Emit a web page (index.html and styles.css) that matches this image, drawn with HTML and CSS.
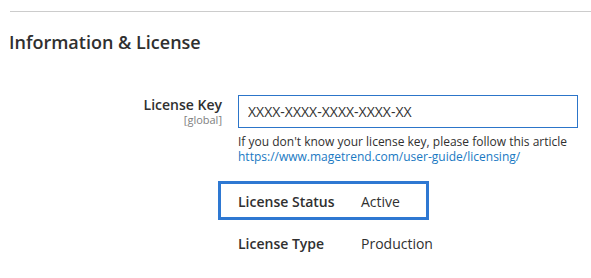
FILE: index.html
```html
<!DOCTYPE html>
<html lang="en">
<head>
<meta charset="utf-8">
<title>Information &amp; License</title>
<link rel="stylesheet" href="styles.css">
</head>
<body>
<div class="page">
  <div class="divider"></div>
  <h2 class="section-title">Information &amp; License</h2>
  <div class="field-row">
    <div class="field-label">
      <div class="label-text">License Key</div>
      <div class="scope">[global]</div>
    </div>
    <div class="field-value">
      <input class="text-input" type="text" value="XXXX-XXXX-XXXX-XXXX-XX">
      <p class="note">If you don't know your license key, please follow this article<br><a class="note-link" href="#">https://www.magetrend.com/user-guide/licensing/</a></p>
      <div class="info-row info-row--highlight">
        <span class="info-label">License Status</span>
        <span class="info-value">Active</span>
      </div>
      <div class="info-row">
        <span class="info-label">License Type</span>
        <span class="info-value">Production</span>
      </div>
    </div>
  </div>
</div>
</body>
</html>
```
FILE: styles.css
```css
* { box-sizing: border-box; }
html, body { margin: 0; padding: 0; background: #fff; }
body {
  font-family: "Open Sans", "Liberation Sans", sans-serif;
  color: #303030;
  width: 591px;
  height: 278px;
  overflow: hidden;
}
.page {
  padding-top: 11px;
}
.divider {
  margin-left: 10px;
  border-top: 1px solid #cccccc;
}
.section-title {
  margin: 18px 0 0 0;
  padding-left: 9px;
  font-size: 18px;
  line-height: 24px;
  font-weight: 600;
  color: #303030;
}
.field-row {
  display: flex;
  gap: 16px;
  margin-top: 41px;
}
.field-label {
  width: 222px;
  text-align: right;
  padding-top: 1px;
}
.label-text {
  font-size: 14px;
  line-height: 18px;
  font-weight: 600;
  color: #303030;
}
.scope {
  margin-top: 0;
  font-size: 11px;
  line-height: 11px;
  color: #808080;
}
.field-value {
  width: 340px;
  display: flex;
  flex-direction: column;
}
.text-input {
  display: block;
  width: 340px;
  height: 33px;
  margin: 0;
  padding: 0 9px;
  border: 1px solid #2c75c9;
  border-radius: 0;
  outline: none;
  font-family: "Open Sans", "Liberation Sans", sans-serif;
  font-size: 14px;
  color: #303030;
  background: #fff;
}
.note {
  margin: 6px 0 0 0;
  font-size: 12px;
  line-height: 15px;
  color: #303030;
}
.note-link {
  color: #1979c3;
  text-decoration: none;
}
.info-row {
  display: flex;
  font-size: 14px;
  line-height: 19px;
}
.info-row--highlight {
  margin-top: 17px;
  margin-left: -20px;
  width: 211px;
  padding: 8px 0 6px 17px;
  border: 3px solid #2e78d2;
}
.info-row--highlight + .info-row {
  margin-top: 14px;
}
.info-label {
  width: 123px;
  font-weight: 600;
  color: #303030;
}
.info-value {
  color: #303030;
}
```
